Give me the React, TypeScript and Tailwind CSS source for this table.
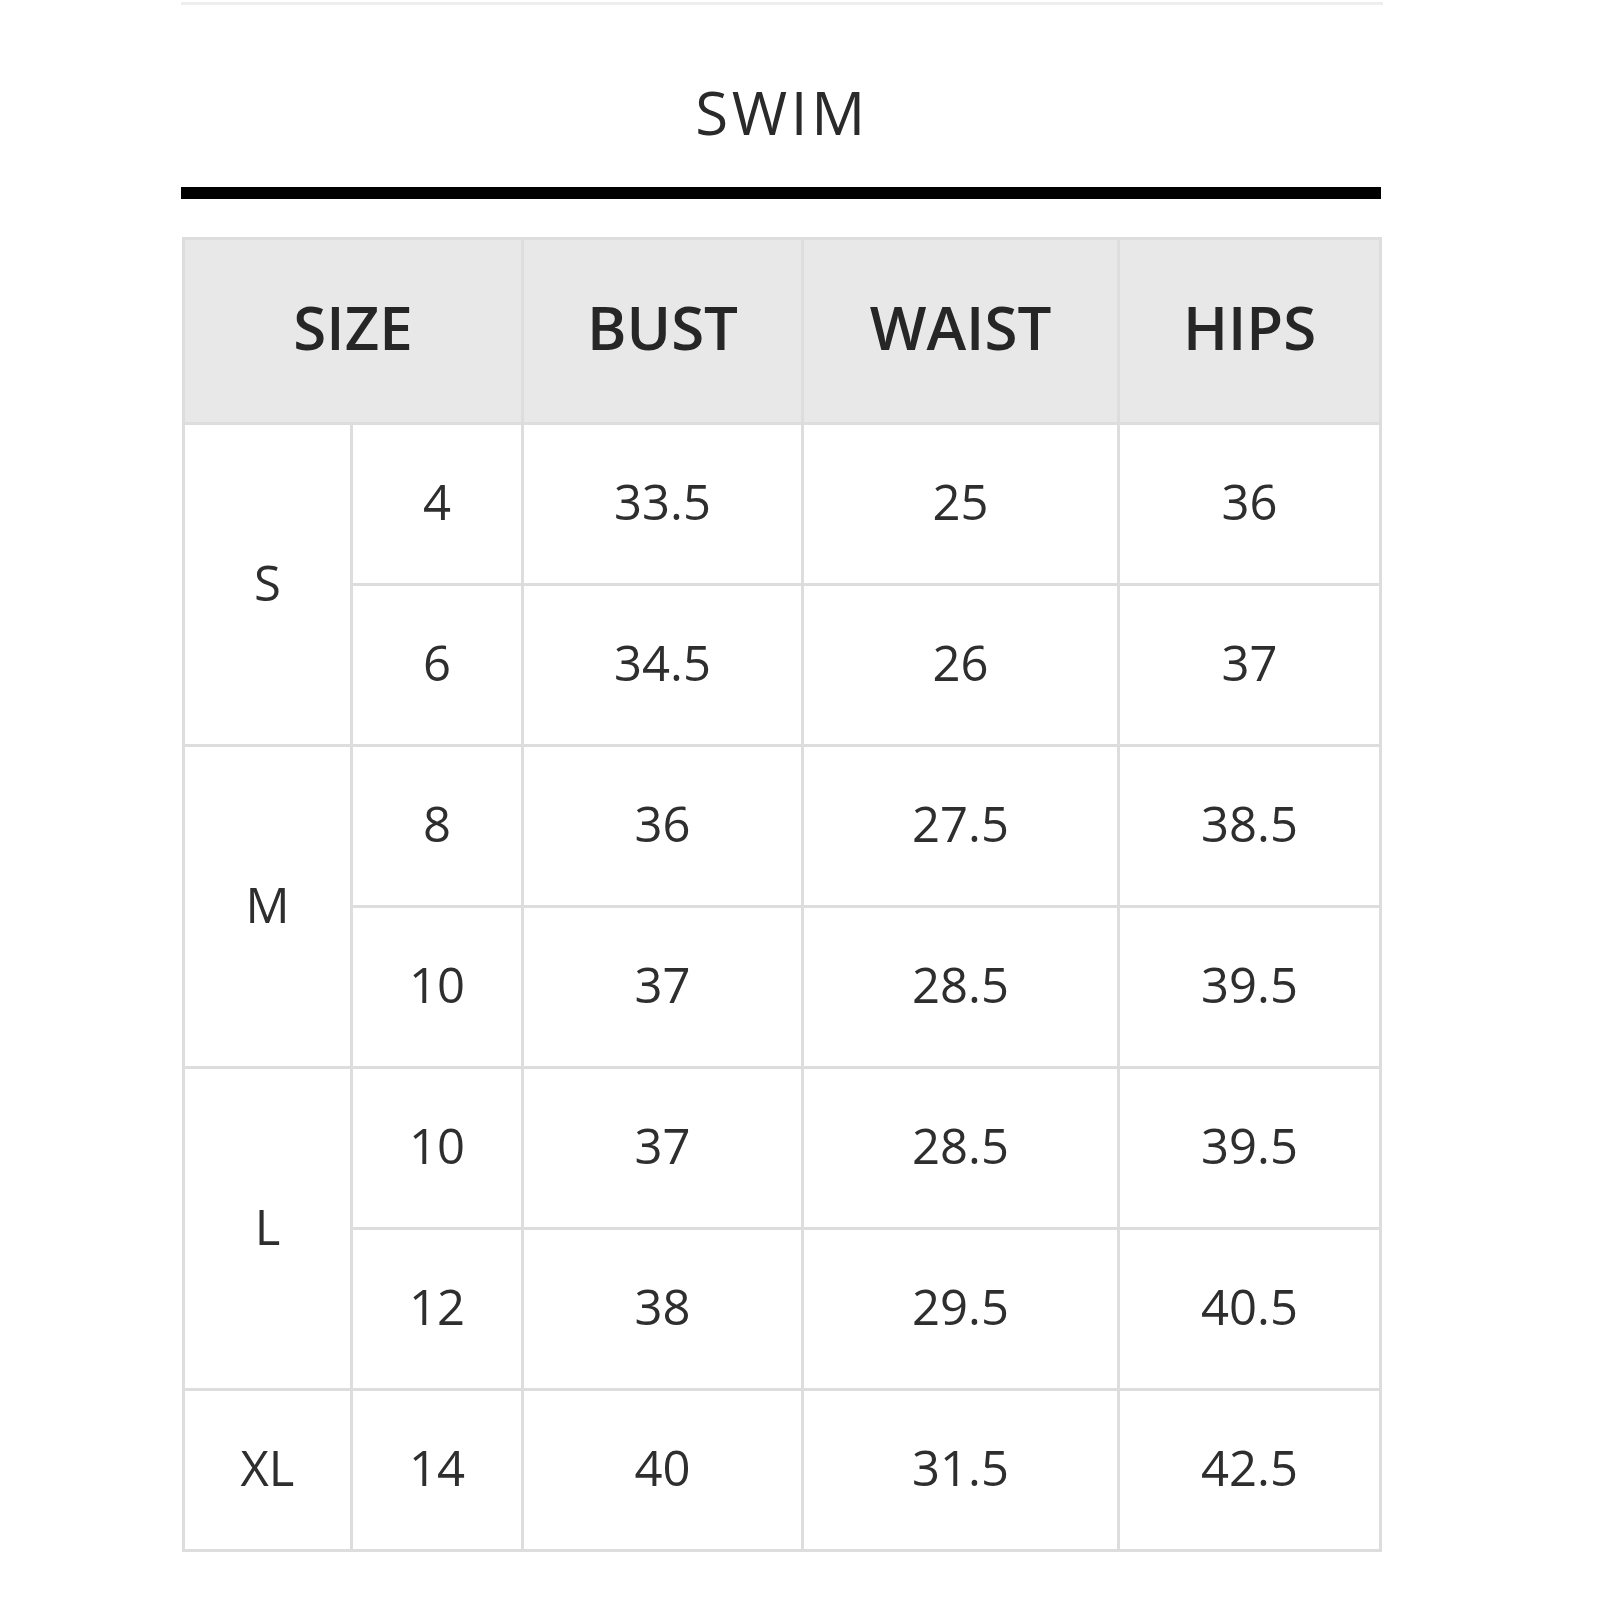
type Row = { size?: string; span?: number; us: string; bust: string; waist: string; hips: string };

const rows: Row[] = [
  { size: "S", span: 2, us: "4", bust: "33.5", waist: "25", hips: "36" },
  { us: "6", bust: "34.5", waist: "26", hips: "37" },
  { size: "M", span: 2, us: "8", bust: "36", waist: "27.5", hips: "38.5" },
  { us: "10", bust: "37", waist: "28.5", hips: "39.5" },
  { size: "L", span: 2, us: "10", bust: "37", waist: "28.5", hips: "39.5" },
  { us: "12", bust: "38", waist: "29.5", hips: "40.5" },
  { size: "XL", span: 1, us: "14", bust: "40", waist: "31.5", hips: "42.5" },
];

const cell = "border-[3px] border-[#dddddd] text-center align-middle px-0 pt-0 pb-[4px]";
const head = "border-[3px] border-[#dddddd] text-center align-middle px-0 pt-0 pb-[8px] text-[60px] font-semibold";

export default function App() {
  return (
    <div className="min-h-[1600px] bg-white font-['Open_Sans',sans-serif] text-[#262626]">
      <div className="ml-[181px] w-[1202px] pt-[2px]">
        <div className="h-[3px] bg-[#eeeeee]" />
        <h1 className="mt-[77px] text-center text-[60px] leading-[60px] font-normal tracking-[0.06em] text-[#2a2a2a]">
          SWIM
        </h1>
        <div className="mt-[45px] w-[1200px] h-[12px] bg-black" />
        <table className="mt-[38px] ml-[1px] w-[1198px] table-fixed border-collapse">
          <colgroup>
            <col className="w-[168px]" />
            <col className="w-[171px]" />
            <col className="w-[280px]" />
            <col className="w-[316px]" />
            <col className="w-[262px]" />
          </colgroup>
          <thead>
            <tr className="h-[185px] bg-[#e8e8e8]">
              <th colSpan={2} className={head}>SIZE</th>
              <th className={head}>BUST</th>
              <th className={head}>WAIST</th>
              <th className={head}>HIPS</th>
            </tr>
          </thead>
          <tbody className="text-[49px] text-[#2e2e2e]">
            {rows.map((r, i) => (
              <tr key={i} className="h-[161px]">
                {r.size && (
                  <td rowSpan={r.span} className={cell}>
                    {r.size}
                  </td>
                )}
                <td className={cell}>{r.us}</td>
                <td className={cell}>{r.bust}</td>
                <td className={cell}>{r.waist}</td>
                <td className={cell}>{r.hips}</td>
              </tr>
            ))}
          </tbody>
        </table>
      </div>
    </div>
  );
}
